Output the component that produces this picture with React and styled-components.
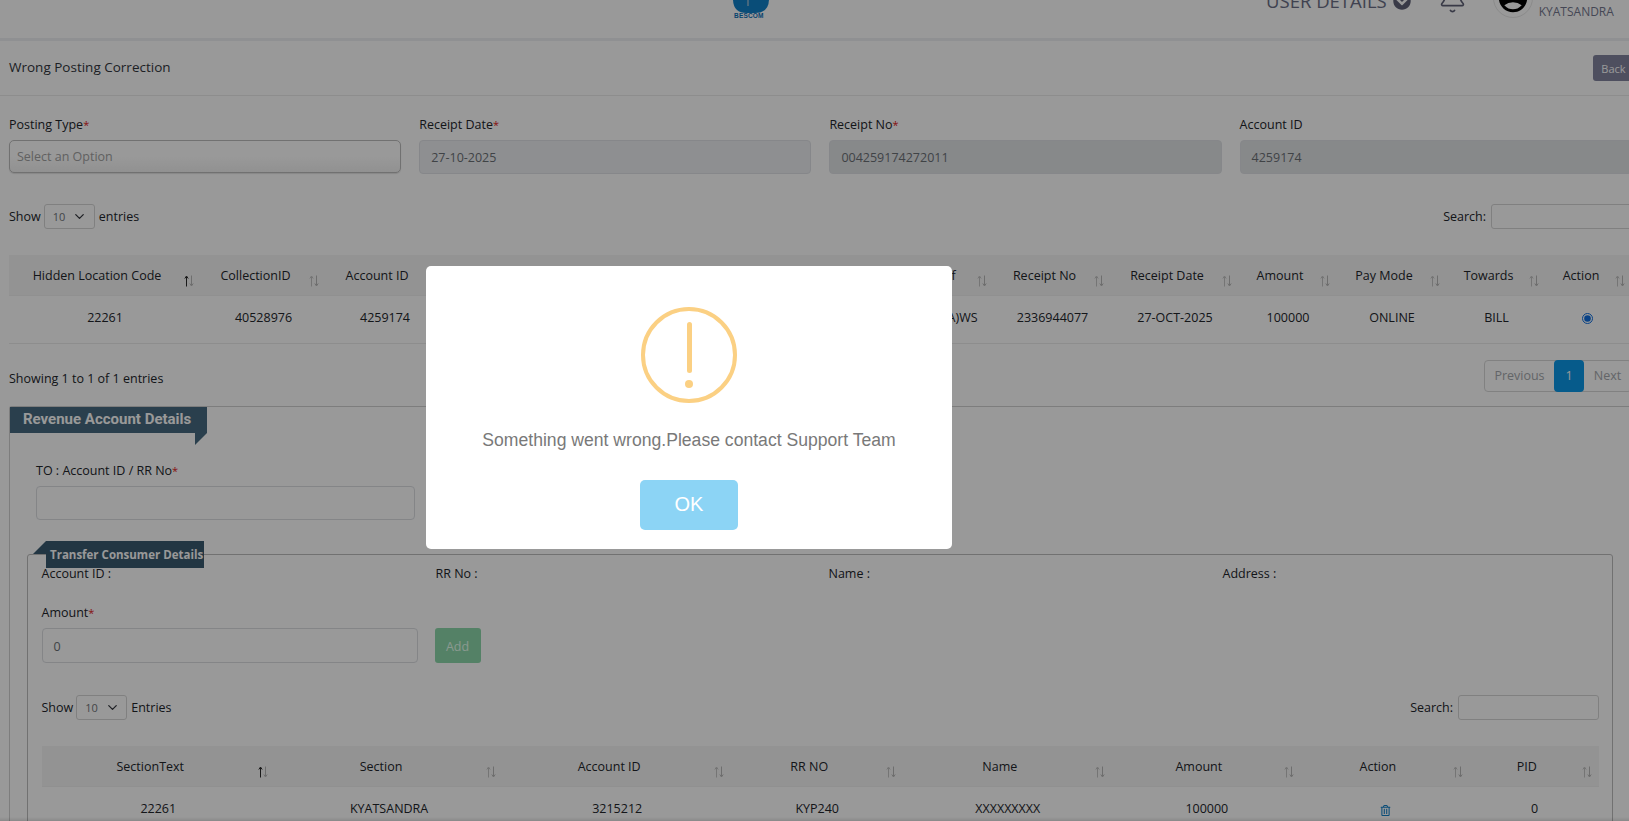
import React from "react";
import styled, { createGlobalStyle } from "styled-components";
import { Bell, ChevronDown } from "lucide-react";
import { FaChevronCircleDown, FaRegTrashAlt } from "react-icons/fa";
import { MdAccountCircle } from "react-icons/md";

const Global = createGlobalStyle`
  html, body { margin: 0; padding: 0; height: 100%; overflow: hidden; background: #fff; }
  * { box-sizing: border-box; }
`;

const Page = styled.div`
  width: 1640px;
  height: 821px;
  overflow: hidden;
  background: #fff;
  color: #22252b;
  font-family: "Open Sans", sans-serif;
  font-size: 12.5px;
  font-weight: 500;
`;

const Header = styled.header`
  height: 41px;
  border-bottom: 3px solid #eef0f3;
  display: flex;
  align-items: flex-end;
  overflow: hidden;
`;
const Logo = styled.div`
  margin-left: 733px;
  width: 36px;
  display: flex;
  flex-direction: column;
  align-items: flex-start;
  margin-bottom: 20px;
`;
const LogoText = styled.span`
  font-family: "Liberation Sans", sans-serif;
  font-size: 6.5px;
  line-height: 5px;
  font-weight: 700;
  letter-spacing: 0.2px;
  color: #0a70b8;
  margin-left: 1px;
  white-space: nowrap;
`;
const UserDetails = styled.div`
  margin-left: 497px;
  margin-bottom: 26px;
  display: flex;
  align-items: center;
  gap: 6px;
  font-size: 18.5px;
  line-height: 22px;
  font-weight: 400;
  color: #6b6f86;
  white-space: nowrap;
  svg {
    color: #5f6277;
  }
`;
const BellWrap = styled.div`
  margin-left: 27px;
  margin-bottom: 24px;
  display: flex;
  color: #5f6277;
`;
const Avatar = styled.div`
  margin-left: 26px;
  margin-bottom: 20px;
  width: 40px;
  height: 40px;
  flex: none;
  border-radius: 50%;
  border: 1px solid #e8e8e8;
  display: flex;
  align-items: center;
  justify-content: center;
  color: #000;
`;
const UserName = styled.div`
  margin-left: 6px;
  margin-bottom: 18px;
  font-size: 12px;
  line-height: 16px;
  color: #74778e;
  white-space: nowrap;
`;

const TitleRow = styled.div`
  height: 55px;
  border-bottom: 1px solid #ececec;
  padding: 0 5px 3px 9px;
  display: flex;
  align-items: center;
  justify-content: space-between;
`;
const Title = styled.h1`
  margin: 0;
  font-size: 13.5px;
  font-weight: 500;
  color: #33363d;
`;
const BackButton = styled.button`
  width: 42px;
  height: 26px;
  margin-top: 3px;
  border: 0;
  border-radius: 3px;
  padding: 0 1px 0 0;
  background: #82849f;
  color: #fff;
  font: 400 11px "Open Sans", sans-serif;
`;

const FormRow = styled.div`
  padding: 19px 0 0 9px;
  display: grid;
  grid-template-columns: repeat(4, 392.2px);
  column-gap: 18px;
`;
const Label = styled.label`
  display: block;
  font-size: 12.5px;
  line-height: 20px;
  margin-bottom: 5px;
  white-space: nowrap;
`;
const Star = styled.span`
  color: #e02020;
  font-size: 11px;
`;
const Field = styled.div`
  width: ${(p) => p.$w || "100%"};
  height: ${(p) => p.$h || 34}px;
  border: 1px solid ${(p) => (p.$disabled ? "#e0e2e6" : "#dcdee2")};
  border-radius: 4px;
  background: ${(p) => (p.$disabled ? p.$disabled : "#fff")};
  color: #6b7076;
  padding: ${(p) => p.$pt || 0}px 11px 0;
  display: flex;
  align-items: center;
  font-weight: 400;
`;
const SelectField = styled.div`
  height: 33px;
  border: 1px solid #bcbcbc;
  border-radius: 5px;
  background: linear-gradient(#ffffff 50%, #f2f2f2);
  color: #a2a2a2;
  padding: 0 7px;
  display: flex;
  align-items: center;
  font-weight: 400;
  box-shadow: 0 1px 1px rgba(0, 0, 0, 0.12);
`;

const ShowRow = styled.div`
  margin-top: ${(p) => p.$mt}px;
  height: 25px;
  display: flex;
  align-items: center;
  justify-content: space-between;
  padding-left: ${(p) => p.$pl || 0}px;
`;
const ShowGroup = styled.div`
  display: flex;
  align-items: center;
  gap: 3px;
`;
const PageSize = styled.div`
  width: 51px;
  height: 25px;
  margin-right: 1px;
  border: 1px solid #d6d6d6;
  border-radius: 3px;
  padding: 0 0 0 8px;
  display: flex;
  align-items: center;
  gap: 7px;
  font-size: 11px;
  font-weight: 400;
  color: #71757a;
`;
const SearchGroup = styled.div`
  display: flex;
  align-items: center;
  gap: 5px;
  font-weight: 500;
`;
const SearchBox = styled.div`
  width: ${(p) => p.$w}px;
  height: 25px;
  border: 1px solid #d6d6d6;
  border-radius: 3px;
`;

const Table = styled.table`
  width: ${(p) => p.$w}px;
  margin-top: 26px;
  margin-left: ${(p) => p.$ml || 0}px;
  table-layout: fixed;
  border-collapse: collapse;
`;
const Col = styled.col`
  width: ${(p) => p.$w}px;
`;
const Th = styled.th`
  position: relative;
  height: ${(p) => p.$h}px;
  background: #f6f6f6;
  padding: 2px 22px 0 6px;
  font-size: 12.5px;
  font-weight: 500;
  text-align: center;
  white-space: nowrap;
  overflow: hidden;
  border-bottom: 1px solid #f1f1f1;
`;
const SortIcon = styled.svg`
  position: absolute;
  right: 6px;
  top: ${(p) => p.$top}px;
  width: 12px;
  height: 12px;
`;
const Td = styled.td`
  height: ${(p) => p.$h}px;
  padding: 0 6px 3px;
  text-align: center;
  white-space: nowrap;
  overflow: hidden;
  border-bottom: ${(p) => (p.$line ? "1px solid #ececec" : "0")};
`;
const Radio = styled.input`
  width: 11px;
  height: 11px;
  margin: 5px 3px 0 0;
  accent-color: #0f6fe0;
`;
const TrashWrap = styled.span`
  color: #1280c8;
  display: inline-flex;
  position: relative;
  top: 3px;
`;

const FooterRow = styled.div`
  margin-top: 15px;
  height: 32px;
  display: flex;
  justify-content: space-between;
  padding-left: 9px;
  padding-right: 8px;
`;
const ShowingText = styled.div`
  padding-top: 10px;
  line-height: 20px;
  font-weight: 400;
`;
const Pager = styled.div`
  display: flex;
  width: 148px;
  margin: 1px 0 -1px;
  border: 1px solid #d8d8d8;
  border-radius: 4px;
`;
const PagerItem = styled.div`
  width: ${(p) => p.$w}px;
  margin: -1px 0;
  border-radius: 4px;
  display: flex;
  align-items: center;
  justify-content: center;
  font-weight: 400;
  color: ${(p) => (p.$active ? "#fff" : "#a5a8ad")};
  background: ${(p) => (p.$active ? "#0a98e8" : "transparent")};
`;

const RevenuePanel = styled.section`
  margin: 15px 0 0 9px;
  height: 500px;
  border: 1px solid #d0d0d0;
  border-right: 0;
  border-radius: 3px 0 0 0;
`;
const RevenueTab = styled.div`
  position: relative;
  width: 197px;
  height: 26px;
  padding-left: 13px;
  background: #476a80;
  color: #fff;
  font: 700 15px/24px Roboto, sans-serif;
  white-space: nowrap;
  &::after {
    content: "";
    position: absolute;
    right: 0;
    top: 26px;
    border-top: 12px solid #476a80;
    border-right: 12px solid transparent;
  }
`;
const ToBlock = styled.div`
  padding: 28px 0 0 26px;
`;

const TransferPanel = styled.section`
  position: relative;
  width: 1586px;
  margin: 34px 0 0 17px;
  height: 400px;
  border: 1px solid #bdbdbd;
  border-radius: 3px;
  padding: 9px 13px 0 13.5px;
`;
const TransferTab = styled.div`
  position: absolute;
  left: 18px;
  top: -14px;
  width: 158px;
  height: 27px;
  padding: 1px 0 0 4px;
  background: #3a5a70;
  color: #fff;
  font-size: 11.5px;
  line-height: 26px;
  font-weight: 700;
  white-space: nowrap;
  &::before {
    content: "";
    position: absolute;
    left: -13px;
    top: 0;
    border-bottom: 13px solid #3a5a70;
    border-left: 13px solid transparent;
  }
`;
const DetailGrid = styled.div`
  display: grid;
  grid-template-columns: 394px 393px 394px 1fr;
  line-height: 20px;
`;
const AmountLabel = styled(Label)`
  margin-top: 19px;
`;
const AmountRow = styled.div`
  display: flex;
  gap: 17px;
`;
const AddButton = styled.button`
  width: 46px;
  height: 35px;
  border: 0;
  border-radius: 3px;
  padding: 2px 0 0;
  background: #8cd8aa;
  color: #e6fff0;
  font: 400 12.5px "Open Sans", sans-serif;
`;

const BottomShade = styled.div`
  position: fixed;
  left: 0;
  right: 0;
  bottom: 0;
  height: 4px;
  background: linear-gradient(rgba(0, 0, 0, 0), rgba(0, 0, 0, 0.1));
`;
const Overlay = styled.div`
  position: fixed;
  inset: 0;
  background: rgba(0, 0, 0, 0.4);
`;
const Modal = styled.div`
  position: fixed;
  left: 426px;
  top: 266px;
  width: 526px;
  height: 283px;
  background: #fff;
  border-radius: 5px;
  display: flex;
  flex-direction: column;
  align-items: center;
  padding-top: 41px;
  font-family: "Liberation Sans", Arial, sans-serif;
`;
const WarnCircle = styled.div`
  position: relative;
  width: 96px;
  height: 96px;
  border: 4px solid #fbd083;
  border-radius: 50%;
  flex: none;
  &::before {
    content: "";
    position: absolute;
    left: 41.5px;
    top: 11px;
    width: 5px;
    height: 51px;
    border-radius: 3px;
    background: #fbd083;
  }
  &::after {
    content: "";
    position: absolute;
    left: 40px;
    top: 69px;
    width: 8px;
    height: 8px;
    border-radius: 50%;
    background: #fbd083;
  }
`;
const ModalText = styled.div`
  margin-top: 25px;
  font-size: 17.6px;
  line-height: 24px;
  color: #797979;
  white-space: nowrap;
`;
const OkButton = styled.button`
  margin-top: 28px;
  width: 98px;
  height: 50px;
  border: 0;
  border-radius: 5px;
  padding: 0 0 2px;
  background: #8cd4f5;
  color: #fff;
  font: 400 20px "Liberation Sans", Arial, sans-serif;
`;

const Sort = ({ top, active }) => (
  <SortIcon $top={top} viewBox="0 0 12 12" fill="none" strokeWidth="1">
    <path d="M3.5 11.5V1.5M1.8 3.5L3.5 1L5.2 3.5" stroke={active ? "#2a2a2a" : "#c4c4c4"} />
    <path d="M8.5 .5V10.5M6.8 8.5L8.5 11L10.2 8.5" stroke="#b8b8b8" />
  </SortIcon>
);

const Req = () => <Star>*</Star>;

const cols1 = [
  ["Hidden Location Code", "22261", 192],
  ["CollectionID", "40528976", 125],
  ["Account ID", "4259174", 118],
  ["RR No", "KYP240", 164],
  ["Name", "XXXXXXXXX", 170],
  ["Section", "KYATSANDRA", 125],
  ["Tariff", "LT-2(A)WS", 91],
  ["Receipt No", "2336944077", 117],
  ["Receipt Date", "27-OCT-2025", 128],
  ["Amount", "100000", 98],
  ["Pay Mode", "ONLINE", 110],
  ["Towards", "BILL", 99],
  ["Action", "radio", 86],
];
const cols2 = [
  ["SectionText", "22261", 233.5],
  ["Section", "KYATSANDRA", 228],
  ["Account ID", "3215212", 228],
  ["RR NO", "KYP240", 172],
  ["Name", "XXXXXXXXX", 209],
  ["Amount", "100000", 189],
  ["Action", "trash", 169],
  ["PID", "0", 128.5],
];

const cellContent = (v) => {
  if (v === "radio") return <Radio type="radio" checked readOnly />;
  if (v === "trash")
    return (
      <TrashWrap>
        <FaRegTrashAlt size={11} />
      </TrashWrap>
    );
  return v;
};

const DataTable = ({ cols, w, ml, headH, rowH, sortTop, line }) => (
  <Table $w={w} $ml={ml}>
    <colgroup>
      {cols.map(([h, , cw]) => (
        <Col key={h} $w={cw} />
      ))}
    </colgroup>
    <thead>
      <tr>
        {cols.map(([h], i) => (
          <Th key={h} $h={headH}>
            {h}
            <Sort top={sortTop} active={i === 0} />
          </Th>
        ))}
      </tr>
    </thead>
    <tbody>
      <tr>
        {cols.map(([h, v]) => (
          <Td key={h} $h={rowH} $line={line}>
            {cellContent(v)}
          </Td>
        ))}
      </tr>
    </tbody>
  </Table>
);

const SizeSelect = () => (
  <PageSize>
    10
    <ChevronDown size={15} strokeWidth={2} color="#33363d" />
  </PageSize>
);

export default function App() {
  return (
    <Page>
      <Global />
      <Header>
        <Logo>
          <svg width="36" height="40" viewBox="0 0 36 40">
            <path d="M0 0H36V26Q36 40 22 40H14Q0 40 0 26Z" fill="#0f80c8" />
            <rect x="14.5" y="0" width="1" height="33" fill="#d8d8d8" />
          </svg>
          <LogoText>BESCOM</LogoText>
        </Logo>
        <UserDetails>
          USER DETAILS
          <FaChevronCircleDown size={18} />
        </UserDetails>
        <BellWrap>
          <Bell size={29} strokeWidth={1.4} />
        </BellWrap>
        <Avatar>
          <MdAccountCircle size={34} />
        </Avatar>
        <UserName>KYATSANDRA</UserName>
      </Header>

      <TitleRow>
        <Title>Wrong Posting Correction</Title>
        <BackButton>Back</BackButton>
      </TitleRow>

      <FormRow>
        <div>
          <Label>
            Posting Type<Req />
          </Label>
          <SelectField>Select an Option</SelectField>
        </div>
        <div>
          <Label>
            Receipt Date<Req />
          </Label>
          <Field $disabled="#edeff2">27-10-2025</Field>
        </div>
        <div>
          <Label>
            Receipt No<Req />
          </Label>
          <Field $disabled="#e2e4e7">004259174272011</Field>
        </div>
        <div>
          <Label>Account ID</Label>
          <Field $disabled="#e2e4e7">4259174</Field>
        </div>
      </FormRow>

      <ShowRow $mt={30} $pl={9}>
        <ShowGroup>
          Show <SizeSelect /> entries
        </ShowGroup>
        <SearchGroup>
          Search:
          <SearchBox $w={149} />
        </SearchGroup>
      </ShowRow>

      <DataTable cols={cols1} w={1623} ml={9} headH={40} rowH={48} sortTop={20} line />

      <FooterRow>
        <ShowingText>Showing 1 to 1 of 1 entries</ShowingText>
        <Pager>
          <PagerItem $w={69}>Previous</PagerItem>
          <PagerItem $w={30} $active>
            1
          </PagerItem>
          <PagerItem $w={47}>Next</PagerItem>
        </Pager>
      </FooterRow>

      <RevenuePanel>
        <RevenueTab>Revenue Account Details</RevenueTab>
        <ToBlock>
          <Label>
            TO : Account ID / RR No<Req />
          </Label>
          <Field $w="379px" />
        </ToBlock>

        <TransferPanel>
          <TransferTab>Transfer Consumer Details</TransferTab>
          <DetailGrid>
            <div>Account ID :</div>
            <div>RR No :</div>
            <div>Name :</div>
            <div>Address :</div>
          </DetailGrid>
          <AmountLabel>
            Amount<Req />
          </AmountLabel>
          <AmountRow>
            <Field $w="376px" $h={35} $pt={2}>
              0
            </Field>
            <AddButton>Add</AddButton>
          </AmountRow>
          <ShowRow $mt={32}>
            <ShowGroup>
              Show <SizeSelect /> Entries
            </ShowGroup>
            <SearchGroup>
              Search:
              <SearchBox $w={141} />
            </SearchGroup>
          </ShowRow>
          <DataTable cols={cols2} w={1557.5} headH={41} rowH={46} sortTop={20} />
        </TransferPanel>
      </RevenuePanel>

      <BottomShade />
      <Overlay />
      <Modal>
        <WarnCircle />
        <ModalText>Something went wrong.Please contact Support Team</ModalText>
        <OkButton>OK</OkButton>
      </Modal>
    </Page>
  );
}
